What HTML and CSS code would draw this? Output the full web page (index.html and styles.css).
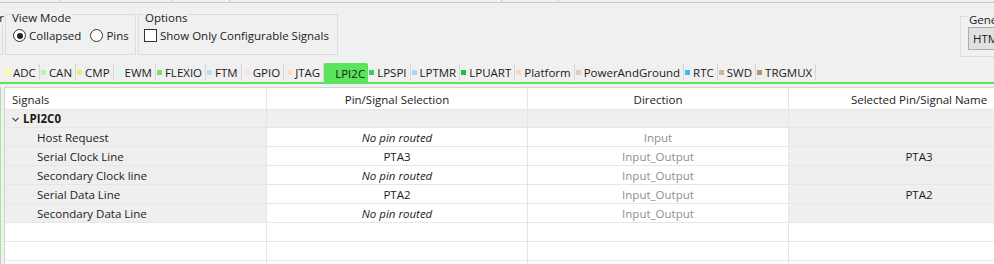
FILE: index.html
```html
<!DOCTYPE html>
<html lang="en">
<head>
    <meta charset="UTF-8">
    <title>Pins - Signals</title>
    <link rel="stylesheet" href="styles.css">
</head>
<body>

    <!-- Editor tab strip edge -->
    <div class="top-edge">
        <span class="edge-tab" style="width: 58px"></span>
        <span class="edge-tab" style="width: 112px"></span>
        <span class="edge-tab" style="width: 58px"></span>
        <span class="edge-tab" style="width: 272px"></span>
        <span class="edge-tab" style="width: 57px"></span>
    </div>

    <!-- Toolbar groups -->
    <div class="toolbar">
        <div class="group stub">
            <div class="group-title">Filter</div>
            <div class="group-body">
                <span class="btn">HTML</span>
            </div>
        </div>

        <div class="group view-mode">
            <div class="group-title">View Mode</div>
            <div class="group-body">
                <label class="radio"><span class="radio-dot checked"></span>Collapsed</label>
                <label class="radio"><span class="radio-dot"></span>Pins</label>
            </div>
        </div>

        <div class="group options">
            <div class="group-title">Options</div>
            <div class="group-body">
                <label class="check"><span class="check-box"></span>Show Only Configurable Signals</label>
            </div>
        </div>

        <div class="group generate">
            <div class="group-title">Generate</div>
            <div class="group-body">
                <span class="btn">HTML</span>
            </div>
        </div>
    </div>

    <!-- Peripheral tabs -->
    <div class="tabs">
        <div class="tab"><span class="sq" style="background: #ffff99"></span>ADC</div>
        <div class="tab"><span class="sq" style="background: #b5fa9c"></span>CAN</div>
        <div class="tab"><span class="sq" style="background: #eeea7a"></span>CMP</div>
        <div class="tab wide"><span class="sq" style="background: #d4f8ff"></span>EWM</div>
        <div class="tab"><span class="sq" style="background: #7fe05f"></span>FLEXIO</div>
        <div class="tab"><span class="sq" style="background: #b4e3ff"></span>FTM</div>
        <div class="tab wide"><span class="sq" style="background: #f3dcff"></span>GPIO</div>
        <div class="tab wide"><span class="sq" style="background: #ffdcc2"></span>JTAG</div>
        <div class="tab wide active"><span class="sq" style="background: #5ce35c"></span>LPI2C</div>
        <div class="tab"><span class="sq" style="background: #2fd25a"></span>LPSPI</div>
        <div class="tab"><span class="sq" style="background: #9bdcff"></span>LPTMR</div>
        <div class="tab"><span class="sq" style="background: #1fbf46"></span>LPUART</div>
        <div class="tab"><span class="sq" style="background: #f0dcc6"></span>Platform</div>
        <div class="tab"><span class="sq" style="background: #e2cdb9"></span>PowerAndGround</div>
        <div class="tab"><span class="sq" style="background: #3fb8f5"></span>RTC</div>
        <div class="tab"><span class="sq" style="background: #c9b6a0"></span>SWD</div>
        <div class="tab"><span class="sq" style="background: #b39472"></span>TRGMUX</div>
    </div>
    <div class="tabs-line"></div>

    <!-- Signals table -->
    <div class="content">
        <div class="side"></div>
        <div class="panel">
            <div class="grid">
                <div class="cell head left">Signals</div>
                <div class="cell head">Pin/Signal Selection</div>
                <div class="cell head">Direction</div>
                <div class="cell head">Selected Pin/Signal Name</div>

                <div class="cell group-row left">
                    <svg class="chevron" width="7" height="5" viewBox="0 0 7 5"><polyline points="0.5,0.8 3.5,3.8 6.5,0.8" fill="none" stroke="#444" stroke-width="1.2"/></svg>
                    <b>LPI2C0</b>
                </div>
                <div class="cell group-row"></div>
                <div class="cell group-row"></div>
                <div class="cell group-row"></div>

                <div class="cell name">Host Request</div>
                <div class="cell pin none">No pin routed</div>
                <div class="cell dir">Input</div>
                <div class="cell sel"></div>

                <div class="cell name">Serial Clock Line</div>
                <div class="cell pin">PTA3</div>
                <div class="cell dir">Input_Output</div>
                <div class="cell sel">PTA3</div>

                <div class="cell name">Secondary Clock line</div>
                <div class="cell pin none">No pin routed</div>
                <div class="cell dir">Input_Output</div>
                <div class="cell sel"></div>

                <div class="cell name">Serial Data Line</div>
                <div class="cell pin">PTA2</div>
                <div class="cell dir">Input_Output</div>
                <div class="cell sel">PTA2</div>

                <div class="cell name">Secondary Data Line</div>
                <div class="cell pin none">No pin routed</div>
                <div class="cell dir">Input_Output</div>
                <div class="cell sel"></div>

                <div class="cell"></div><div class="cell"></div><div class="cell"></div><div class="cell"></div>
                <div class="cell"></div><div class="cell"></div><div class="cell"></div><div class="cell"></div>
                <div class="cell"></div><div class="cell"></div><div class="cell"></div><div class="cell"></div>
            </div>
        </div>
    </div>

</body>
</html>
```

FILE: styles.css
```css
/* Layout */
* {
    box-sizing: border-box;
    margin: 0;
    padding: 0;
}
html, body {
    width: 994px;
    height: 264px;
    overflow: hidden;
}
body {
    font-family: "Open Sans", "Noto Sans", sans-serif;
    font-size: 11.5px;
    color: #1b1b1b;
    background-color: #f0f0f0;
}

/* Editor tab strip edge */
.top-edge {
    display: flex;
    height: 3px;
    border-bottom: 1px solid #c9c9c9;
    padding-left: 2px;
}
.edge-tab {
    height: 2px;
    border-right: 1px solid #c9c9c9;
}

/* Toolbar groups */
.toolbar {
    display: flex;
    align-items: flex-start;
    gap: 2px;
    padding-top: 11px;
}
.group {
    height: 41px;
    border: 1px solid #dcdcdc;
    padding: 0 5px;
}
.group-title {
    width: fit-content;
    margin-top: -4px;
    line-height: 14px;
    padding: 0 1px;
    background-color: #f0f0f0;
}
.group-body {
    display: flex;
    align-items: center;
    height: 19px;
    margin-top: 1px;
    white-space: nowrap;
}
.stub {
    width: 56px;
    margin-left: -53px;
    padding: 0 0 0 8px;
}
.stub .group-title {
    margin-left: auto;
    margin-right: -3px;
}
.view-mode {
    width: 131px;
}
.options {
    width: 200px;
}
.generate {
    width: 80px;
    margin-left: auto;
    margin-right: -46px;
    margin-top: 2px;
    padding-left: 7px;
}
.generate .group-body {
    margin-top: 0;
    height: 24px;
    align-items: flex-start;
}
.btn {
    display: inline-block;
    height: 23px;
    line-height: 21px;
    padding: 0 4px;
    background-color: #e1e1e1;
    border: 1px solid #adadad;
}
.radio, .check {
    display: inline-flex;
    align-items: center;
    gap: 3px;
    margin-left: 2px;
}
.radio + .radio {
    margin-left: 9px;
}
.radio-dot {
    width: 13px;
    height: 13px;
    border: 1px solid #333;
    border-radius: 50%;
    background-color: #fff;
    position: relative;
}
.radio-dot.checked::after {
    content: "";
    position: absolute;
    left: 2.5px;
    top: 2.5px;
    width: 6px;
    height: 6px;
    border-radius: 50%;
    background-color: #222;
}
.check {
    margin-left: 0;
}
.check-box {
    width: 13px;
    height: 13px;
    border: 1px solid #333;
    background-color: #fff;
}

/* Peripheral tabs */
.tabs {
    display: flex;
    margin-top: 6px;
    padding-left: 4px;
    height: 19px;
    white-space: nowrap;
}
.tab {
    display: flex;
    align-items: center;
    gap: 3px;
    padding: 1px 3px 0 1px;
    border-right: 1px solid #d6d6d6;
    height: 18px;
}
.tab.wide {
    padding-left: 3px;
}
.tab.active {
    height: 19px;
    padding-right: 3px;
    background-color: #5ce35c;
    border-right: none;
    border-radius: 2px 2px 0 0;
}
.sq {
    width: 5px;
    height: 5px;
    flex-shrink: 0;
}
.tabs-line {
    height: 2px;
    background-color: #5ce35c;
}

/* Signals table */
.content {
    display: flex;
    margin-top: 3px;
}
.side {
    width: 4px;
    height: 190px;
    border-right: 1px solid #a9e2a9;
}
.panel {
    margin-left: 3px;
    background-color: #fff;
    border-top: 1px solid #d4d4d4;
    border-left: 1px solid #d4d4d4;
    height: 190px;
}
.grid {
    display: grid;
    grid-template-columns: 262px 261px 261px 261px;
    grid-template-rows: 22px 18px repeat(8, 19px);
}
.cell {
    display: flex;
    align-items: center;
    justify-content: center;
    border-right: 1px solid #e6e6e6;
    border-bottom: 1px solid #e6e6e6;
    white-space: nowrap;
    overflow: hidden;
}
.cell.left {
    justify-content: flex-start;
    padding-left: 4px;
}
.head {
    padding-top: 1px;
}
.head.left {
    padding-left: 7px;
}
.group-row {
    background-color: #efefef;
    border-right-color: #e4e4e4;
}
.group-row.left {
    padding-left: 7px;
    gap: 4px;
}
.chevron {
    margin-top: 1px;
}
.group-row b {
    font-weight: 700;
}
.name {
    justify-content: flex-start;
    padding-left: 32px;
    background-color: #efefef;
}
.pin.none {
    font-style: italic;
}
.dir {
    color: #8f8f8f;
}
.sel {
    background-color: #efefef;
}
```
